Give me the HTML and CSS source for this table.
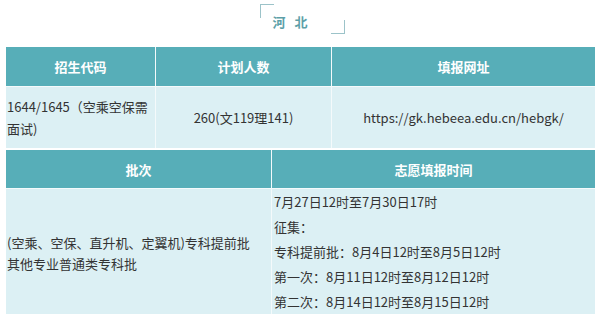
FILE: index.html
```html
<!DOCTYPE html>
<html lang="zh-CN">
<head>
<meta charset="utf-8">
<title>河北</title>
<link rel="stylesheet" href="styles.css">
</head>
<body>
<div class="page">
  <div class="title-wrap">
    <h2 class="title">河 北</h2>
  </div>
  <div class="grid grid-top">
    <div class="cell head">招生代码</div>
    <div class="cell head">计划人数</div>
    <div class="cell head">填报网址</div>
    <div class="cell data code">1644/1645（空乘空保需面试)</div>
    <div class="cell data center">260(文119理141)</div>
    <div class="cell data center">https://gk.hebeea.edu.cn/hebgk/</div>
  </div>
  <div class="grid grid-bottom">
    <div class="cell head">批次</div>
    <div class="cell head">志愿填报时间</div>
    <div class="cell data batch">
      <p>(空乘、空保、直升机、定翼机)专科提前批</p>
      <p>其他专业普通类专科批</p>
    </div>
    <div class="cell data times">
      <p>7月27日12时至7月30日17时</p>
      <p>征集：</p>
      <p>专科提前批：8月4日12时至8月5日12时</p>
      <p>第一次：8月11日12时至8月12日12时</p>
      <p>第二次：8月14日12时至8月15日12时</p>
    </div>
  </div>
</div>
</body>
</html>
```
FILE: styles.css
```css
* { box-sizing: border-box; }
html, body { margin: 0; padding: 0; background: #ffffff; }
body {
  font-family: "Noto Sans CJK SC", "Noto Sans", sans-serif;
  font-size: 13px;
  color: #333333;
}
.page {
  width: 600px;
  padding: 0 5px 0 6px;
}
.title-wrap {
  height: 47px;
  display: flex;
  justify-content: center;
}
.title {
  position: relative;
  margin: 4px 0 0 3px;
  width: 85px;
  height: 30px;
  padding: 9px 0 0 13px;
  font-size: 13px;
  line-height: 17px;
  font-weight: bold;
  letter-spacing: 3px;
  color: #5d9fa8;
}
.title::before,
.title::after {
  content: "";
  position: absolute;
  width: 13px;
  height: 13px;
  border-color: #9cc3c9;
  border-style: solid;
  border-width: 0;
}
.title::before {
  left: 0;
  top: 0;
  border-top-width: 1px;
  border-left-width: 1px;
}
.title::after {
  right: 0;
  bottom: 0;
  border-bottom-width: 1px;
  border-right-width: 1px;
}
.grid {
  display: grid;
  gap: 1px;
  background: #f4fafb;
}
.grid-top {
  grid-template-columns: 149px 175px 263px;
  grid-template-rows: 39px 61px;
  margin-bottom: 2px;
}
.grid-bottom {
  grid-template-columns: 265px 323px;
  grid-template-rows: 38px auto;
}
.cell {
  display: flex;
  align-items: center;
}
.head {
  background: #57aeb8;
  color: #ffffff;
  font-weight: bold;
  justify-content: center;
}
.data {
  background: #dcf0f4;
  line-height: 22px;
}
.center { justify-content: center; }
.code { padding: 0 1px; }
.batch {
  flex-direction: column;
  justify-content: center;
  align-items: flex-start;
  padding: 2px 1px 0;
  line-height: 21px;
}
.times {
  flex-direction: column;
  align-items: flex-start;
  justify-content: flex-start;
  padding: 0 2px;
  line-height: 25px;
}
p { margin: 0; }
```
